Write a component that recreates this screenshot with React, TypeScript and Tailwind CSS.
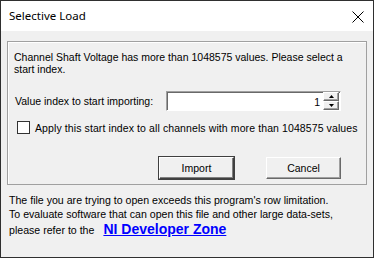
import { useState } from 'react';

const font = { fontFamily: '"Liberation Sans", Arial, sans-serif' };

function SpinButton({ up }: { up?: boolean }) {
  return (
    <div className="flex h-[9px] w-[16px] items-center justify-center bg-[#f0f0f0] border-t border-l border-white shadow-[inset_-1px_-1px_0_#a0a0a0] border-r border-b border-r-[#696969] border-b-[#696969]">
      <svg width="5" height="3" viewBox="0 0 5 3">
        {up ? <path d="M2.5 0 L5 3 L0 3 Z" fill="#000" /> : <path d="M0 0 L5 0 L2.5 3 Z" fill="#000" />}
      </svg>
    </div>
  );
}

export default function App() {
  const [applyAll, setApplyAll] = useState(false);

  return (
    <div className="w-[374px] h-[258px] border border-[#2f2f2f] bg-[#f0f0f0] flex flex-col text-black overflow-hidden" style={font}>
      <div className="h-[30px] bg-white flex items-center justify-between pl-[8px] pr-[9px] shrink-0">
        <span className="text-[11.5px]" style={{ fontFamily: '"Noto Sans", "Open Sans", sans-serif' }}>Selective Load</span>
        <svg width="12" height="12" viewBox="0 0 12 12" className="mt-[1px]">
          <path d="M0.5 0.5 L11.5 11.5 M11.5 0.5 L0.5 11.5" stroke="#000" strokeWidth="1" />
        </svg>
      </div>

      <div className="flex-1 px-[6px] pt-[10px]">
        <div className="h-[144px] border border-[#a0a0a0] shadow-[inset_1px_1px_0_#fff] pl-[6px] pr-[4px] pt-[9px] text-[10.5px] leading-[12px] whitespace-nowrap">
          <p>Channel Shaft Voltage has more than 1048575 values. Please select a<br />start index.</p>

          <div className="mt-[16px] flex items-center">
            <span className="ml-[1px] w-[151px]">Value index to start importing:</span>
            <div className="h-[20px] w-[175px] flex items-center bg-white border border-t-[#a0a0a0] border-l-[#a0a0a0] border-r-[#fff] border-b-[#fff] shadow-[inset_1px_1px_0_#696969]">
              <span className="flex-1 text-right pr-[3px] pt-[1px]">1</span>
              <div className="flex flex-col mr-[1px]">
                <SpinButton up />
                <SpinButton />
              </div>
            </div>
          </div>

          <label className="mt-[10px] flex items-center cursor-pointer">
            <span className="ml-[3px] w-[13px] h-[13px] bg-white border border-[#333] flex items-center justify-center shrink-0">
              <input type="checkbox" className="hidden" checked={applyAll} onChange={e => setApplyAll(e.target.checked)} />
              {applyAll && (
                <svg width="9" height="9" viewBox="0 0 9 9"><path d="M1 4.5 L3.5 7 L8 1.5" stroke="#000" strokeWidth="1.5" fill="none" /></svg>
              )}
            </span>
            <span className="ml-[5px] tracking-[0.1px]">Apply this start index to all channels with more than 1048575 values</span>
          </label>

          <div className="mt-[23px] flex">
            <button className="ml-[145px] w-[75px] h-[22px] bg-[#f0f0f0] border border-t-white border-l-white border-r-[#404040] border-b-[#404040] shadow-[inset_-1px_-1px_0_#808080] outline outline-1 outline-[#404040]">
              Import
            </button>
            <button className="ml-[32px] w-[75px] h-[22px] bg-[#f0f0f0] border border-t-white border-l-white border-r-[#696969] border-b-[#696969] shadow-[inset_-1px_-1px_0_#a0a0a0]">
              Cancel
            </button>
          </div>
        </div>

        <div className="mt-[8px] pl-[2px] text-[10.6px] leading-[14px] whitespace-nowrap">
          <p>The file you are trying to open exceeds this program's row limitation.</p>
          <p>To evaluate software that can open this file and other large data-sets,</p>
          <p className="flex items-end">
            <span>please refer to the</span>
            <a href="#" className="ml-[9px] text-[14px] font-bold text-[#0000ff] underline leading-[16px]">NI Developer Zone</a>
          </p>
        </div>
      </div>
    </div>
  );
}
